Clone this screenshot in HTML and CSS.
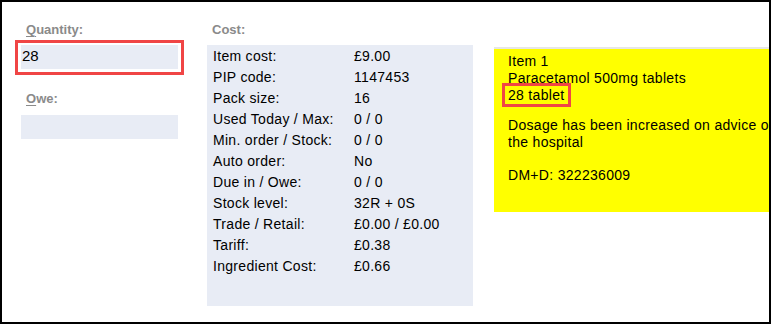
FILE: index.html
```html
<!DOCTYPE html>
<html lang="en">
<head>
<meta charset="utf-8">
<title>Item</title>
<link rel="stylesheet" href="styles.css">
</head>
<body>
<div class="frame">
  <div class="col-left">
    <div class="label"><u>Q</u>uantity:</div>
    <div class="highlight">
      <div class="field">28</div>
    </div>
    <div class="label label-owe"><u>O</u>we:</div>
    <div class="field field-owe"></div>
  </div>
  <div class="col-mid">
    <div class="label">Cost:</div>
    <div class="panel">
      <div class="row"><span class="k">Item cost:</span><span>£9.00</span></div>
      <div class="row"><span class="k">PIP code:</span><span>1147453</span></div>
      <div class="row"><span class="k">Pack size:</span><span>16</span></div>
      <div class="row"><span class="k">Used Today / Max:</span><span>0 / 0</span></div>
      <div class="row"><span class="k">Min. order / Stock:</span><span>0 / 0</span></div>
      <div class="row"><span class="k">Auto order:</span><span>No</span></div>
      <div class="row"><span class="k">Due in / Owe:</span><span>0 / 0</span></div>
      <div class="row"><span class="k">Stock level:</span><span>32R + 0S</span></div>
      <div class="row"><span class="k">Trade / Retail:</span><span>£0.00 / £0.00</span></div>
      <div class="row"><span class="k">Tariff:</span><span>£0.38</span></div>
      <div class="row"><span class="k">Ingredient Cost:</span><span>£0.66</span></div>
    </div>
  </div>
  <div class="col-right">
    <div class="note">
      <p>Item 1<br>Paracetamol 500mg tablets<br><span class="mark">28 tablet</span></p>
      <p class="p2">Dosage has been increased on advice of<br>the hospital</p>
      <p class="p3">DM+D: 322236009</p>
    </div>
  </div>
</div>
</body>
</html>
```
FILE: styles.css
```css
html, body {
  margin: 0;
  padding: 0;
  background: #fff;
}
.frame {
  box-sizing: border-box;
  width: 771px;
  height: 324px;
  border: 2px solid #000;
  padding: 21px 0 0 19px;
  display: flex;
  align-items: flex-start;
  font-family: "Liberation Sans", Arial, sans-serif;
  font-size: 14px;
  letter-spacing: 0.3px;
  color: #000;
  overflow: hidden;
}
.label {
  font-size: 13px;
  font-weight: bold;
  line-height: 14px;
  letter-spacing: 0;
  color: #8a8a8a;
  padding-left: 5px;
}
.label u {
  text-decoration-thickness: 1px;
  text-underline-offset: 2px;
}
.col-left {
  width: 157px;
  display: flex;
  flex-direction: column;
}
.highlight {
  margin: 3px -6px 0;
  border: 3px solid #f04545;
  padding: 2px 3px 3px;
}
.field {
  box-sizing: border-box;
  height: 24px;
  background: #e8ecf5;
  padding: 2px 1px;
  line-height: 18px;
  font-size: 15px;
  letter-spacing: 0;
}
.label-owe {
  margin-top: 17px;
}
.field-owe {
  margin-top: 9px;
}
.col-mid {
  width: 266px;
  margin-left: 29px;
}
.panel {
  box-sizing: border-box;
  margin-top: 8px;
  height: 261px;
  background: #e8ecf5;
  padding: 1px 0 0 6px;
}
.row {
  display: flex;
  line-height: 21px;
  white-space: nowrap;
}
.row .k {
  width: 141px;
}
.col-right {
  flex: 1;
  margin-left: 21px;
  margin-top: 24px;
  min-width: 0;
}
.note {
  box-sizing: border-box;
  height: 165px;
  border-top: 2px solid #e6e6e6;
  background: #ffff00;
  padding: 4px 0 0 14px;
  line-height: 17px;
  white-space: nowrap;
  overflow: hidden;
}
.note p {
  margin: 0;
}
.note .p2 {
  margin-top: 13px;
}
.note .p3 {
  margin-top: 16px;
}
.mark {
  position: relative;
}
.mark::after {
  content: "";
  position: absolute;
  top: -4px;
  bottom: -4px;
  left: -6px;
  right: -7px;
  border: 3px solid #f04545;
}
```
